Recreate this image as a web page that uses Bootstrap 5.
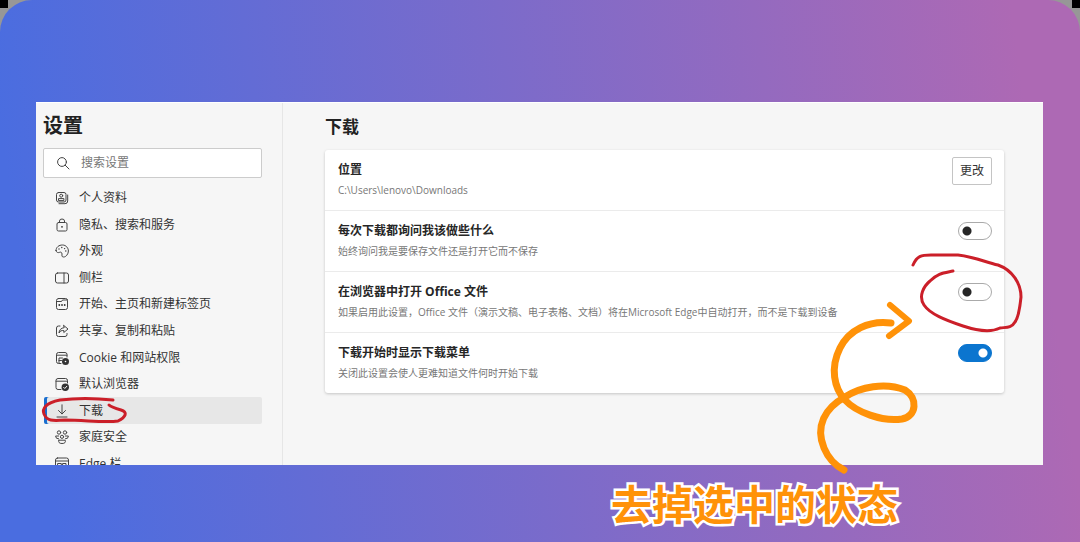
<!DOCTYPE html>
<html lang="zh-CN">
<head>
<meta charset="utf-8">
<meta name="viewport" content="width=device-width, initial-scale=1">
<title>设置 - 下载</title>
<link href="https://cdn.jsdelivr.net/npm/bootstrap@5.3.0/dist/css/bootstrap.min.css" rel="stylesheet">
<style>
  body { background: linear-gradient(#000, #000) 0 0 / 8px 8px no-repeat, linear-gradient(#000, #000) 100% 0 / 8px 8px no-repeat, #979797;
    font-family: "Open Sans", "Noto Sans CJK SC", sans-serif; font-size: 12px; line-height: 20px; color: #333; }
  .stage { height: 100vh; padding: 102px 37px 0 36px; border-radius: 32px 32px 0 0;
    background: linear-gradient(82deg, #4a6de0 5%, #ad69b4 94%); }
  .window-wrap { min-height: 0; }
  .window { background: #f6f6f6; border-top: 1px solid #fff; }
  .sidebar { width: 247px; border-right: 1px solid #e6e6e6; padding: 13px 20px 0 7px; }
  h1 { font-size: 20px; line-height: 20px; font-weight: 700; color: #222; margin: 0 0 12px; }
  h2 { font-size: 17px; line-height: 20px; font-weight: 700; color: #222; margin: 0 0 13px; }
  .search-box { height: 30px; border: 1px solid #ccc; border-radius: 2px; background: #fff; padding-left: 12px; gap: 11px; }
  .search-box input { font-size: 12px; outline: 0; color: #333; }
  .search-box input::placeholder { color: #777; opacity: 1; }
  .side-list { display: grid; grid-auto-rows: 1fr; height: 292px; margin: 7px 0 0 1px; flex-shrink: 0; }
  .side-list a { color: #333; text-decoration: none; padding-left: 11px; gap: 10px; height: 100%; }
  .side-list li.current { background: #e7e7e7; border-radius: 2px; box-shadow: inset 3px 0 #1a6fd0; }
  .ico { width: 14px; height: 14px; fill: none; stroke: #444; stroke-width: 1; stroke-linecap: round; stroke-linejoin: round; flex: none; }
  .ico .solid { fill: #333; stroke: none; }
  .content { padding: 14px 39px 0 42px; }
  .panel { background: #fff; border-radius: 3px; box-shadow: 0 1px 3px rgba(0,0,0,.2); }
  .setting { padding: 10px 12px 10px 13px; }
  .setting + .setting { border-top: 1px solid #ebebeb; }
  .setting-title { font-weight: 700; color: #262626; }
  .setting-note { font-size: 10px; color: #777; }
  .change-btn { width: 40px; height: 28px; margin-top: -3px; padding: 0; border: 1px solid #c4c4c4; border-radius: 2px; background: #fff; font-size: 12px; color: #333; }
  .form-check-input.toggle { width: 34px; height: 18px; margin: 1px 0 0; border: 1px solid #aaa; border-radius: 9px;
    background: radial-gradient(circle at 8px 8px, #262626 4px, transparent 5px) #fff; }
  .form-check-input.toggle:checked { border-color: #0b75cf; background: radial-gradient(circle at 24px 8px, #fff 4px, transparent 5px) #0b75cf; }
  .ink { position: absolute; overflow: visible; fill: none; stroke-linecap: round; stroke-linejoin: round; pointer-events: none; }
  .ink-red { stroke: #cb1f29; stroke-width: 3; }
  .ink-orange { stroke: #ff9208; stroke-width: 7; }
  .ink-nav { left: -4px; top: -2px; }
  .ink-toggle { right: -24px; top: -22px; z-index: 1; }
  .ink-arrow { right: 127px; bottom: -11px; z-index: 2; }
  .caption-bar { height: 77px; padding: 7px 145px 0 0; }
  .caption-text { font-family: "Noto Sans CJK SC", sans-serif; font-size: 41px; line-height: 60px; font-weight: 700; color: #ff9208;
    -webkit-text-stroke: 5px #fff; paint-order: stroke fill; }
</style>
</head>
<body>
<div class="stage d-flex flex-column">
  <div class="window-wrap position-relative flex-grow-1 d-flex">
    <div class="window d-flex flex-grow-1 overflow-hidden">
      <nav class="sidebar d-flex flex-column flex-shrink-0" aria-label="设置">
        <h1>设置</h1>
        <div class="search-box d-flex align-items-center flex-shrink-0">
          <svg class="ico" viewBox="0 0 14 14"><circle cx="6" cy="6" r="4.4"/><path d="M9.2 9.2 13 13"/></svg>
          <input class="border-0 bg-transparent p-0 flex-grow-1" type="search" placeholder="搜索设置" aria-label="搜索设置">
        </div>
        <ul class="side-list list-unstyled">
          <li><a href="#" class="d-flex align-items-center"><svg class="ico" viewBox="0 0 14 14"><rect x="1.5" y="1.5" width="9.5" height="9.5" rx="2"/><circle cx="6.2" cy="4.7" r="1.5"/><path d="M3.5 9.2V7.6h5.4v1.6zM12.7 4v6q0 2.7-2.7 2.7H4"/></svg>个人资料</a></li>
          <li><a href="#" class="d-flex align-items-center"><svg class="ico" viewBox="0 0 14 14"><rect x="2" y="4.5" width="10" height="8.5" rx="1.5"/><path d="M4.5 4.5V3q0-2 2.5-2t2.5 2v1.5"/><circle class="solid" cx="7" cy="8.8" r=".9"/></svg>隐私、搜索和服务</a></li>
          <li><a href="#" class="d-flex align-items-center"><svg class="ico" viewBox="0 0 14 14"><path d="M1 6.5C1 3 4 1 7.5 1S13.4 4 13.4 7 11 13 8.700 13 7 11.500 7 10 5.800 7.700 4.700 8.300 1 8.800 1 6.500z"/><g class="solid"><circle cx="4" cy="5" r=".7"/><circle cx="6.800" cy="3.500" r=".7"/><circle cx="9.600" cy="4.600" r=".7"/><circle cx="10.800" cy="7" r=".7"/></g></svg>外观</a></li>
          <li><a href="#" class="d-flex align-items-center"><svg class="ico" viewBox="0 0 14 14"><rect x=".5" y="2" width="13" height="10" rx="2"/><path d="M9 2v10"/></svg>侧栏</a></li>
          <li><a href="#" class="d-flex align-items-center"><svg class="ico" viewBox="0 0 14 14"><rect x="1.5" y="1.5" width="11" height="11" rx="2"/><path d="M1.5 4.5h5l1-1.500h5"/><g class="solid"><circle cx="4.300" cy="8" r=".9"/><circle cx="7" cy="8" r=".9"/><circle cx="9.700" cy="8" r=".9"/></g></svg>开始、主页和新建标签页</a></li>
          <li><a href="#" class="d-flex align-items-center"><svg class="ico" viewBox="0 0 14 14"><path d="M5 2H3.500q-2 0-2 2v6.500q0 2 2 2H10q2 0 2-2V9.500M8.800 1.500 13 5 8.800 8.500v-2C6.500 6.300 5 7 4 9c.2-3 2-5 4.800-5.300z"/></svg>共享、复制和粘贴</a></li>
          <li><a href="#" class="d-flex align-items-center"><svg class="ico" viewBox="0 0 14 14"><path d="M6 12.500H3.500q-2 0-2-2V3.500q0-2 2-2H10q2 0 2 2V6M1.500 4.200H12M4 12V7h3.500M4 9.500h2.500"/><circle class="solid" cx="10.500" cy="10.500" r="3.500"/><circle cx="10.500" cy="10.500" r=".8" fill="#fff" stroke="none"/></svg>Cookie 和网站权限</a></li>
          <li><a href="#" class="d-flex align-items-center"><svg class="ico" viewBox="0 0 14 14"><path d="M6 12.500H3q-2 0-2-2V3.500q0-2 2-2h7.500q2 0 2 2V6M1 4.200h11.500"/><circle class="solid" cx="10.300" cy="10.300" r="3.700"/><path d="m8.700 10.400 1.100 1.100 2-2.200" stroke="#fff"/></svg>默认浏览器</a></li>
          <li class="current position-relative"><a href="#" class="d-flex align-items-center" aria-current="page"><svg class="ico" viewBox="0 0 14 14"><path d="M7 .8v9M3.500 6.500 7 10l3.500-3.500M2 13h10"/></svg>下载</a>
            <svg class="ink ink-red ink-nav" width="90" height="30" viewBox="40 396 90 30" aria-hidden="true"><path d="M113 401C95 399 75 399 60 401C45 404 42 410 44 415C47 422 52 422 65 421C85 421 105 424 118 422C126 418 128 413 121 411C114 409 111 408 109 406"/></svg></li>
          <li><a href="#" class="d-flex align-items-center"><svg class="ico" viewBox="0 0 14 14"><circle cx="4" cy="2.500" r="1.700"/><circle cx="10" cy="2.500" r="1.700"/><circle cx="7" cy="6.800" r="1.600"/><path d="M3.800 10.200h6.400q1 3.300-3.200 3.300t-3.200-3.300M3.500 8.800Q.6 9 .6 6h3M10.500 8.800q2.900.2 2.900-2.800h-3"/></svg>家庭安全</a></li>
          <li><a href="#" class="d-flex align-items-center"><svg class="ico" viewBox="0 0 14 14"><rect x=".5" y="1" width="13" height="12" rx="2"/><path d="M.5 4h13M3 6.500h3.300V13H3zM8 6.500h3V13H8z"/></svg>Edge 栏</a></li>
        </ul>
      </nav>
      <main class="content flex-grow-1">
        <h2>下载</h2>
        <div class="panel">
          <div class="setting d-flex justify-content-between align-items-start">
            <div><div class="setting-title">位置</div><div class="setting-note">C:\Users\lenovo\Downloads</div></div>
            <button type="button" class="change-btn">更改</button>
          </div>
          <div class="setting d-flex justify-content-between align-items-start">
            <div><label class="setting-title d-block" for="ask">每次下载都询问我该做些什么</label><div class="setting-note">始终询问我是要保存文件还是打开它而不保存</div></div>
            <input class="form-check-input toggle" type="checkbox" role="switch" id="ask">
          </div>
          <div class="setting d-flex justify-content-between align-items-start position-relative">
            <div><label class="setting-title d-block" for="office">在浏览器中打开 Office 文件</label><div class="setting-note">如果启用此设置，Office 文件（演示文稿、电子表格、文档）将在Microsoft Edge中自动打开，而不是下载到设备</div></div>
            <input class="form-check-input toggle" type="checkbox" role="switch" id="office">
            <svg class="ink ink-red ink-toggle" width="120" height="84" viewBox="908 250 120 84" aria-hidden="true"><path d="M913 265C917 256 921 255 931 255L958 255C975 257 985 262 998 265C1012 270 1021 283 1021 297C1020 307 1018 318 1015 322C1011 329 1005 327 1000 328C990 333 975 330 963 326C945 320 930 314 924 305C918 296 924 286 930 281C938 273 943 273 953 271"/></svg>
          </div>
          <div class="setting d-flex justify-content-between align-items-start">
            <div><label class="setting-title d-block" for="menu">下载开始时显示下载菜单</label><div class="setting-note">关闭此设置会使人更难知道文件何时开始下载</div></div>
            <input class="form-check-input toggle" type="checkbox" role="switch" id="menu" checked>
          </div>
        </div>
      </main>
    </div>
    <svg class="ink ink-orange ink-arrow" width="104" height="176" viewBox="812 300 104 176" aria-hidden="true"><path d="M891 323C869 320 849 330 840 348C830 368 834 388 845 400C856 412 882 422 902 419C917 416 918 398 905 390C885 382 860 387 845 397C825 408 815 426 824 448C829 460 836 466 844 470"/><path d="M890 305 909 321 889 336" stroke-width="6"/></svg>
  </div>
  <footer class="caption-bar flex-shrink-0 text-end"><span class="caption-text">去掉选中的状态</span></footer>
</div>
<script src="https://cdn.jsdelivr.net/npm/bootstrap@5.3.0/dist/js/bootstrap.bundle.min.js"></script>
</body>
</html>
